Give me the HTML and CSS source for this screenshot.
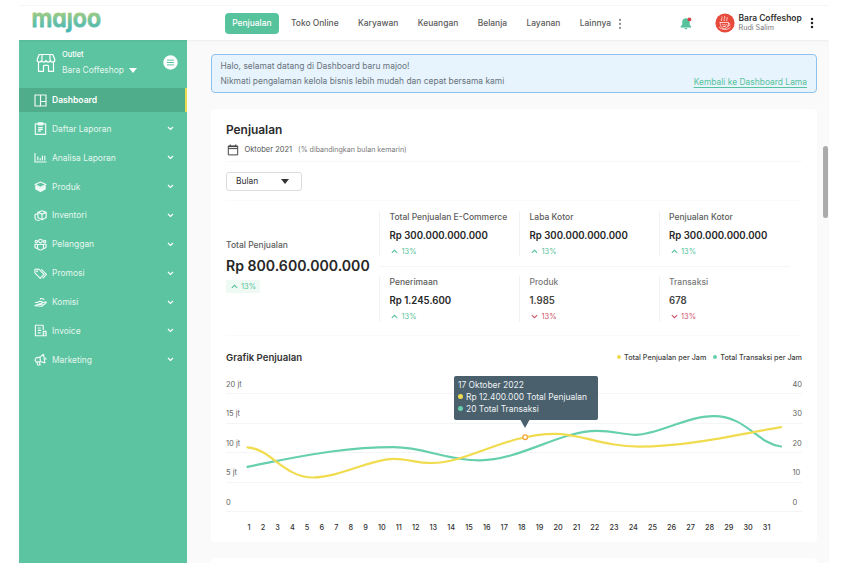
FILE: index.html
```html
<!DOCTYPE html>
<html lang="id">

<head>
    <meta charset="utf-8">
    <title>majoo - Dashboard</title>
    <link rel="stylesheet" href="styles.css">
</head>

<body>
    <div class="app">
        <header class="topbar">
            <svg class="logo" width="205" height="34" viewBox="0 0 205 34">
                <defs>
                    <linearGradient id="brand" gradientUnits="userSpaceOnUse" x1="0" y1="6" x2="0" y2="26">
                        <stop offset="0" stop-color="#a3cc80"/>
                        <stop offset=".5" stop-color="#66c0a2"/>
                        <stop offset="1" stop-color="#45b5b5"/>
                    </linearGradient>
                </defs>
                <text x="12.500" y="21" textLength="69.500" lengthAdjust="spacingAndGlyphs">majoo</text>
                <!-- hides the dot of the j -->
                <path class="nodot" d="M40 0h18v6.400H40z"/>
            </svg>
            <nav class="nav">
                <a class="nav-link active">Penjualan</a>
                <a class="nav-link">Toko Online</a>
                <a class="nav-link">Karyawan</a>
                <a class="nav-link">Keuangan</a>
                <a class="nav-link">Belanja</a>
                <a class="nav-link">Layanan</a>
                <a class="nav-link">Lainnya</a>
                <svg class="dots" width="4" height="12" viewBox="0 0 4 12" fill="#888"><circle cx="2" cy="1.9" r="1.1"/><circle cx="2" cy="5.9" r="1.1"/><circle cx="2" cy="9.9" r="1.1"/></svg>
            </nav>
            <div class="account">
                <svg class="bell" width="12" height="13" viewBox="0 0 12 13">
                    <path d="M5.500 1.200c-2.200.3-3.300 2-3.300 4v2.600L.6 9.600v.8h10.600v-.8L9.700 7.800V5C9.600 3 8 1 5.500 1.200z" fill="#55c29b"/>
                    <path d="M4.400 11h3a1.500 1.300 0 0 1-3 0z" fill="#55c29b"/>
                    <circle cx="9.400" cy="2.400" r="1.900" fill="#d9424a"/>
                </svg>
                <svg class="avatar" width="20" height="20" viewBox="0 0 20 20">
                    <circle cx="10" cy="10" r="9.600" fill="#e8493a"/>
                    <g fill="none" stroke="#fff" stroke-width=".7" stroke-linecap="round" stroke-linejoin="round">
                        <path d="M5.200 9.500h8.400c0 3.400-1.400 6-4.200 6s-4.200-2.600-4.200-6z"/>
                        <path d="M13.500 10.500c2.300-.6 2.300 2.900-.8 2.600M4.200 14.200c2 2.700 8.500 3.300 11 .3"/>
                        <path d="M6.500 7.800C5 6.200 8.200 5.600 7 3.800M9.200 7.800c-1.500-1.700 1.800-2.500.4-4.600M11.800 7.800c-1.200-1.400 1.300-2 .4-3.400"/>
                        <path d="M7.500 11.500c1 1.200 1.200-.8 2.200.4s1.200-.6 2-.4M8 13.500h2.500"/>
                    </g>
                </svg>
                <div class="who">
                    <div class="who-shop">Bara Coffeshop</div>
                    <div class="who-name">Rudi Salim</div>
                </div>
                <svg class="more" width="4" height="12" viewBox="0 0 4 12" fill="#222"><circle cx="2" cy="1.900" r="1.250"/><circle cx="2" cy="6" r="1.250"/><circle cx="2" cy="10.100" r="1.250"/></svg>
            </div>
        </header>

        <div class="body">
            <aside class="sidebar">
                <div class="outlet">
                    <svg width="20" height="20" viewBox="0 0 20 20" fill="none" stroke="#fff" stroke-width="1.200" stroke-linejoin="round" stroke-linecap="round">
                        <path d="M3.200 1.500h13.600l2 5v.8c0 2.300-4.300 2.300-4.400 0 0 2.300-4.400 2.300-4.400 0 0 2.300-4.400 2.300-4.400 0-.1 2.300-4.400 2.300-4.400 0v-.8zM6 6.800V1.500M14 6.800V1.500"/>
                        <path d="M2.500 9.500v8.800h5v-5.300c0-1.200 5-1.200 5 0v5.300h5V9.500"/>
                    </svg>
                    <div class="outlet-text">
                        <div class="outlet-label">Outlet</div>
                        <div class="outlet-name">Bara Coffeshop <i class="caret"></i></div>
                    </div>
                    <svg class="burger" width="15" height="15" viewBox="0 0 15 15"><circle cx="7.500" cy="7.500" r="7.200" fill="#fff"/><path d="M4 5.100h7M4 7.500h7M4 9.900h7" stroke="#5cc4a1" stroke-width="1"/></svg>
                </div>
                <ul class="menu">
                    <li class="menu-item current">
                        <svg class="icon" viewBox="0 0 13 13"><path d="M1 1h11v11H1zM6.500 1v11M6.500 7.500H12"/></svg>
                        <span>Dashboard</span>
                    </li>
                    <li class="menu-item">
                        <svg class="icon" viewBox="0 0 13 13"><path d="M1.300 1.800h10.400v10.500H1.300z"/><path d="M4.200.8h4.600v2H4.200z" fill="#fff"/><path d="M4.200 5.600h4.600M4.200 7.300h4.600M4.200 9h2.600" stroke-width="1.300"/></svg>
                        <span>Daftar Laporan</span>
                        <svg class="chevron" viewBox="0 0 7 5"><path d="M1 1l2.500 2.500L6 1"/></svg>
                    </li>
                    <li class="menu-item">
                        <svg class="icon" viewBox="0 0 13 13"><path d="M1 2v9h11.500M3.800 9.500v-4M6.200 9.500V7M8.400 9.500v-5M10.800 9.500V4.800"/></svg>
                        <span>Analisa Laporan</span>
                        <svg class="chevron" viewBox="0 0 7 5"><path d="M1 1l2.500 2.500L6 1"/></svg>
                    </li>
                    <li class="menu-item">
                        <svg class="icon" viewBox="0 0 13 13"><path d="M6.500 2L12 4.600 6.500 7.300 1 4.600z"/><path d="M1.800 6v3l4.700 2.400L11.200 9V6L6.500 8.600z" fill="#f0faf6"/></svg>
                        <span>Produk</span>
                        <svg class="chevron" viewBox="0 0 7 5"><path d="M1 1l2.500 2.500L6 1"/></svg>
                    </li>
                    <li class="menu-item">
                        <svg class="icon" viewBox="0 0 13 13"><path d="M8 1.800l4.200 1.600v5.200L8 10.700 3.900 8.600V3.400zM3.900 3.400L8 5.100l4.200-1.700M8 5.100v5.600M3.900 4.600L1 5.500V9l1.200 2 3.500.5"/></svg>
                        <span>Inventori</span>
                        <svg class="chevron" viewBox="0 0 7 5"><path d="M1 1l2.500 2.500L6 1"/></svg>
                    </li>
                    <li class="menu-item">
                        <svg class="icon" viewBox="0 0 13 13"><circle cx="6.500" cy="3" r="1.800"/><circle cx="2.300" cy="3.600" r="1.200"/><circle cx="10.700" cy="3.600" r="1.200"/><path d="M3.500 6.500h6v3c0 3.300-6 3.300-6 0zM3.300 6.200H.9v2c0 1.400 1 2.200 2.400 2.200M9.700 6.200h2.400v2c0 1.400-1 2.200-2.400 2.200"/></svg>
                        <span>Pelanggan</span>
                        <svg class="chevron" viewBox="0 0 7 5"><path d="M1 1l2.500 2.500L6 1"/></svg>
                    </li>
                    <li class="menu-item">
                        <svg class="icon" viewBox="0 0 13 13"><path d="M.9 2.200v3.600l5.300 5.500 3.800-3.900-5.200-5.300zM7.200 2.200l5.200 5.200-3.600 3.900"/><circle cx="3" cy="4.200" r=".4"/></svg>
                        <span>Promosi</span>
                        <svg class="chevron" viewBox="0 0 7 5"><path d="M1 1l2.500 2.500L6 1"/></svg>
                    </li>
                    <li class="menu-item">
                        <svg class="icon" viewBox="0 0 13 13"><path d="M1 6.500h2.500l1.700-1.200 2.500.2 1.200 1.200-2.300.5M8.900 6.700L12 5.800c.8.6-.6 1.800-4.300 4.500L1 9.600z"/><path d="M4.500 8.400h4M6.500 2v1.500M6.500 2.800c2-.7 3.300.2 3.300 1.400"/></svg>
                        <span>Komisi</span>
                        <svg class="chevron" viewBox="0 0 7 5"><path d="M1 1l2.500 2.500L6 1"/></svg>
                    </li>
                    <li class="menu-item">
                        <svg class="icon" viewBox="0 0 13 13"><path d="M9.200 6V1.200H1.400v10.500h7M3.700 4h3M3.700 6.300h3.500M3.700 8.800h3M1.400 11.700h10.700V7.300H9.300v4.400M10.800 9.300v.8"/></svg>
                        <span>Invoice</span>
                        <svg class="chevron" viewBox="0 0 7 5"><path d="M1 1l2.500 2.500L6 1"/></svg>
                    </li>
                    <li class="menu-item">
                        <svg class="icon" viewBox="0 0 13 13"><path d="M9.500 1.300L6 4.100l-4 .8-.9 2.300 1 1.900 4-.6 4.800 1.400zM6 4.100l.4 4.400M3 9.200l.8 2.800h2.300l-.7-3.200M11.500 4.700l.6 1.900"/></svg>
                        <span>Marketing</span>
                        <svg class="chevron" viewBox="0 0 7 5"><path d="M1 1l2.500 2.500L6 1"/></svg>
                    </li>
                </ul>
            </aside>

            <main class="main">
                <section class="notice">
                    <div>
                        <p>Halo, selamat datang di Dashboard baru majoo!</p>
                        <p>Nikmati pengalaman kelola bisnis lebih mudah dan cepat bersama kami</p>
                    </div>
                    <a class="notice-link">Kembali ke Dashboard Lama</a>
                </section>

                <section class="card">
                    <h1>Penjualan</h1>
                    <div class="period">
                        <svg width="12" height="12" viewBox="0 0 12 12" fill="none" stroke="#444" stroke-width="1"><path d="M1.300 2h9.400v8.900H1.300zM1.300 4.600h9.400M3.300.5V2M8.700.5V2"/><path d="M1.300 2.500h9.400" stroke-width="1.200"/></svg>
                        <span class="month">Oktober 2021</span>
                        <span class="compare">(% dibandingkan bulan kemarin)</span>
                    </div>
                    <div class="filter">
                        <div class="select">Bulan <i class="caret"></i></div>
                    </div>

                    <div class="stats">
                        <div class="total">
                            <div class="stat-label">Total Penjualan</div>
                            <div class="total-value">Rp 800.600.000.000</div>
                            <div class="trend badge"><svg viewBox="0 0 7 5"><path d="M.8 3.800l2.700-2.500 2.700 2.500"/></svg>13%</div>
                        </div>
                        <div class="stat-grid">
                            <div class="stat">
                                <div class="stat-label">Total Penjualan E-Commerce</div>
                                <div class="stat-value">Rp 300.000.000.000</div>
                                <div class="trend"><svg viewBox="0 0 7 5"><path d="M.8 3.800l2.700-2.500 2.700 2.500"/></svg>13%</div>
                            </div>
                            <div class="stat">
                                <div class="stat-label">Laba Kotor</div>
                                <div class="stat-value">Rp 300.000.000.000</div>
                                <div class="trend"><svg viewBox="0 0 7 5"><path d="M.8 3.800l2.700-2.500 2.700 2.500"/></svg>13%</div>
                            </div>
                            <div class="stat">
                                <div class="stat-label">Penjualan Kotor</div>
                                <div class="stat-value">Rp 300.000.000.000</div>
                                <div class="trend"><svg viewBox="0 0 7 5"><path d="M.8 3.800l2.700-2.500 2.700 2.500"/></svg>13%</div>
                            </div>
                            <div class="stat">
                                <div class="stat-label">Penerimaan</div>
                                <div class="stat-value">Rp 1.245.600</div>
                                <div class="trend"><svg viewBox="0 0 7 5"><path d="M.8 3.800l2.700-2.500 2.700 2.500"/></svg>13%</div>
                            </div>
                            <div class="stat muted">
                                <div class="stat-label">Produk</div>
                                <div class="stat-value">1.985</div>
                                <div class="trend down"><svg viewBox="0 0 7 5"><path d="M.8 1.200l2.700 2.500 2.700-2.500"/></svg>13%</div>
                            </div>
                            <div class="stat muted">
                                <div class="stat-label">Transaksi</div>
                                <div class="stat-value">678</div>
                                <div class="trend down"><svg viewBox="0 0 7 5"><path d="M.8 1.200l2.700 2.500 2.700-2.500"/></svg>13%</div>
                            </div>
                        </div>
                    </div>

                    <div class="chart-head">
                        <h2>Grafik Penjualan</h2>
                        <div class="legend">
                            <span><i class="dot yellow"></i>Total Penjualan per Jam</span>
                            <span><i class="dot green"></i>Total Transaksi per Jam</span>
                        </div>
                    </div>
                    <div class="chart">
                        <div class="line"><span>20 jt</span><span>40</span></div>
                        <div class="line"><span>15 jt</span><span>30</span></div>
                        <div class="line"><span>10 jt</span><span>20</span></div>
                        <div class="line"><span>5 jt</span><span>10</span></div>
                        <div class="line"><span>0</span><span>0</span></div>
                        <svg class="plot" viewBox="226 365 576 147" fill="none" stroke-width="2.200" stroke-linecap="round">
                            <path stroke="#66cfae" d="M247.500 466.800C261 464 270 462 277 460.800C305 455.500 345 447.200 394 447.200C425 447.200 445 460.300 480 460.300C520 460.300 560 430.800 597 430.800C615 430.800 622 434.800 636 434.800C658 434.800 686 416.100 714 416.100C746 416.100 757 443.500 781 446.500"/>
                            <path stroke="#f0dc4e" d="M247.500 447.300C271 449 284 477.500 313 477.500C340 477.500 370 458.800 394 458.800C408 458.800 416 463 432 463C468 463 506 433.800 555 433.800C582 433.800 602 446.600 640 446.600C688 446.600 740 434 781 427.200"/>
                            <circle cx="525.200" cy="437.200" r="2.300" fill="#fff" stroke="#f2a53a" stroke-width="1.300"/>
                        </svg>
                        <div class="tooltip">
                            <div>17 Oktober 2022</div>
                            <div><i class="dot yellow"></i>Rp 12.400.000 Total Penjualan</div>
                            <div><i class="dot green"></i>20 Total Transaksi</div>
                        </div>
                    </div>
                    <div class="days">
                        <span>1</span><span>2</span><span>3</span><span>4</span><span>5</span><span>6</span><span>7</span><span>8</span>
                        <span>9</span><span>10</span><span>11</span><span>12</span><span>13</span><span>14</span><span>15</span><span>16</span>
                        <span>17</span><span>18</span><span>19</span><span>20</span><span>21</span><span>22</span><span>23</span><span>24</span>
                        <span>25</span><span>26</span><span>27</span><span>28</span><span>29</span><span>30</span><span>31</span>
                    </div>
                </section>

                <section class="card next"></section>
                <div class="scrollbar"></div>
            </main>
        </div>
    </div>
</body>

</html>
```

FILE: styles.css
```css
* {
    box-sizing: border-box;
}

body {
    margin: 0;
    background: #fff;
    font-family: Inter, "Liberation Sans", sans-serif;
    font-size: 8.45px;
    color: #555;
}

h1, h2, p, ul {
    margin: 0;
    padding: 0;
}

.app {
    width: 810px;
    height: 558px;
    margin: 5px 0 0 19px;
    overflow: hidden;
    border-top: 1px solid #f6f6f6;
}

/* top bar */
.topbar {
    position: relative;
    z-index: 1;
    display: flex;
    align-items: center;
    height: 34px;
    background: #fff;
    box-shadow: 0 1px 2px rgba(0, 0, 0, 0.06);
}

.logo {
    flex: none;
    margin-right: 1px;
    font-size: 24.5px;
    font-weight: 600;
    font-feature-settings: "cv11";
    fill: url(#brand);
    stroke: url(#brand);
    stroke-width: 0.8;
    stroke-linejoin: round;
}

.nodot {
    fill: #fff;
    stroke: none;
}

.nav {
    display: flex;
    align-items: center;
    gap: 5px;
    height: 100%;
    padding-top: 1px;
}

.nav-link {
    padding: 0 7.2px;
    line-height: 21.5px;
    font-weight: 500;
    border-radius: 4px;
    color: #5a5a5a;
    white-space: nowrap;
}

.nav-link.active {
    background: #57c39c;
    color: #fff;
}

.dots {
    margin-left: -5.5px;
}

.account {
    display: flex;
    align-items: center;
    margin-left: auto;
    padding-right: 15px;
}

.bell {
    margin-right: 23px;
}

.who {
    width: 75.5px;
    padding-left: 4px;
    line-height: 10.5px;
}

.who-shop {
    font-weight: 600;
    color: #333;
    white-space: nowrap;
}

.who-name {
    font-size: 7.2px;
    color: #777;
}

.body {
    display: flex;
    height: 523px;
}

/* sidebar */
.sidebar {
    width: 168px;
    background: #5cc4a1;
    color: #fff;
}

.outlet {
    display: flex;
    align-items: center;
    height: 48px;
    padding: 0 9px 3px 16.5px;
}

.outlet-text {
    flex: 1;
    padding-left: 6.5px;
    line-height: 14.5px;
}

.outlet-label {
    font-size: 7.5px;
    font-weight: 500;
}

.outlet-name {
    color: #e4f6ef;
}

.caret {
    display: inline-block;
    margin-left: 3px;
    border: 4px solid transparent;
    border-top: 5px solid currentColor;
    border-bottom: 0;
}

.outlet-name .caret {
    border-top-color: #fff;
}

.menu {
    display: flex;
    flex-direction: column;
    gap: 4.87px;
    list-style: none;
}

.menu-item {
    display: flex;
    align-items: center;
    height: 24px;
    padding: 0 13px 0 14.5px;
    color: #e4f6ef;
}

.menu-item span {
    flex: 1;
    padding-left: 5.5px;
}

.menu-item.current {
    background: #4fad8c;
    border-right: 2px solid #e8dc50;
    color: #fff;
    font-size: 8.55px;
    font-weight: 600;
}

.icon {
    width: 13px;
    height: 13px;
    fill: none;
    stroke: #f0faf6;
    stroke-width: 1.15;
    stroke-linejoin: round;
}

.chevron {
    width: 7px;
    height: 5px;
    fill: none;
    stroke: #fff;
    stroke-width: 1.2;
}

/* content */
.main {
    position: relative;
    flex: 1;
    padding: 14px 12px 0 24px;
    background: #fafafa;
}

.notice {
    display: flex;
    justify-content: space-between;
    align-items: flex-end;
    height: 39px;
    padding: 0 9px 4px 8.5px;
    border: 1px solid #8fc1ee;
    border-radius: 4px;
    background: #e7f3fd;
    line-height: 14.5px;
    color: #68737c;
}

.notice-link {
    line-height: 12px;
    color: #57c39c;
    text-decoration: underline;
    text-underline-offset: 2px;
}

.card {
    height: 432.5px;
    margin-top: 16px;
    padding: 13px 15px 0;
    border-radius: 4px;
    background: #fff;
}

.card.next {
    height: 20px;
}

h1 {
    font-size: 11.9px;
    font-weight: 600;
    line-height: 16px;
    color: #2b2b2b;
}

.period {
    display: flex;
    align-items: center;
    height: 24px;
    padding-left: 1px;
    border-bottom: 1px solid #f8f8f8;
    font-size: 7.5px;
}

.month {
    padding: 0 6px 0 5.5px;
}

.compare {
    font-size: 7.1px;
    color: #777;
}

.filter {
    height: 39px;
    padding-top: 9.5px;
    border-bottom: 1px solid #fafafa;
}

.select {
    display: flex;
    justify-content: space-between;
    align-items: center;
    width: 76px;
    height: 19.5px;
    padding: 0 12px 0 9px;
    border: 1px solid #dcdcdc;
    border-radius: 3px;
    color: #333;
}

.stats {
    display: flex;
    height: 135px;
    padding: 10px 12px 14px 0;
    border-bottom: 1px solid #fafafa;
}

.total {
    width: 153px;
    padding-top: 27px;
}

.stat-label {
    height: 14px;
    line-height: 14px;
    font-size: 8.5px;
    font-weight: 500;
    color: #5c5c5c;
    white-space: nowrap;
}

.total-value {
    line-height: 28px;
    font-size: 14.1px;
    font-weight: 600;
    color: #262626;
    white-space: nowrap;
}

.stat-grid {
    flex: 1;
    display: grid;
    grid-template-columns: 140px 139.5px 1fr;
    grid-template-rows: 45px 46px;
    row-gap: 20px;
    background: linear-gradient(#f6f6f6, #f6f6f6) 0 55px / 100% 1px no-repeat;
}

.stat {
    padding-left: 9.5px;
    border-left: 1px solid #f2f2f2;
}

.stat .stat-label {
    line-height: 12px;
}

.stat-value {
    line-height: 21px;
    font-size: 9.65px;
    font-weight: 600;
    color: #262626;
    white-space: nowrap;
}

.muted .stat-label {
    color: #777;
}

.muted .stat-value {
    color: #444;
}

.trend {
    display: flex;
    align-items: center;
    gap: 3.5px;
    height: 12px;
    padding-left: 1.5px;
    font-size: 7.5px;
    color: #57c39c;
}

.trend svg {
    width: 7px;
    height: 5px;
    fill: none;
    stroke: currentColor;
    stroke-width: 1.1;
}

.stat .trend {
    margin-top: -0.5px;
}

.trend.down {
    color: #d0546a;
}

.badge {
    width: 34px;
    height: 13px;
    padding-left: 4.5px;
    background: #effaf5;
}

/* chart */
.chart-head {
    display: flex;
    justify-content: space-between;
    align-items: flex-end;
    height: 29px;
    padding-bottom: 1px;
}

h2 {
    font-size: 9.6px;
    font-weight: 600;
    line-height: 12px;
    color: #333;
}

.legend {
    display: flex;
    gap: 7px;
    font-size: 7.2px;
    font-weight: 500;
    line-height: 12px;
    color: #444;
}

.dot {
    display: inline-block;
    width: 4px;
    height: 4px;
    margin-right: 3px;
    border-radius: 50%;
    vertical-align: 1px;
}

.yellow {
    background: #f0dc4e;
}

.green {
    background: #66cfae;
}

.chart {
    position: relative;
    height: 147px;
}

.line {
    display: flex;
    justify-content: space-between;
    height: 29.4px;
    padding-top: 14px;
    border-bottom: 1px solid #f5f5f5;
    font-size: 7.5px;
    line-height: 12px;
    color: #666;
}

.line span:last-child {
    width: 9.5px;
}

.plot {
    position: absolute;
    left: 0;
    top: 0;
    width: 576px;
    height: 147px;
}

.tooltip {
    position: absolute;
    left: 227.5px;
    top: 11px;
    width: 144px;
    height: 44px;
    padding: 3px 4.5px;
    border-radius: 2px;
    background: #4a606d;
    color: #eef2f4;
    line-height: 12.2px;
    white-space: nowrap;
}

.tooltip::after {
    content: "";
    position: absolute;
    left: 66.5px;
    top: 43px;
    border: 5.5px solid transparent;
    border-top: 9px solid #4a606d;
    border-bottom: 0;
}

.tooltip .dot {
    width: 5px;
    height: 5px;
}

.days {
    display: flex;
    justify-content: space-between;
    padding: 10px 31.5px 0 21.5px;
    font-size: 7.3px;
    font-weight: 500;
    line-height: 12px;
    color: #333;
}

.scrollbar {
    position: absolute;
    right: 1px;
    top: 106px;
    width: 5px;
    height: 72px;
    border-radius: 3px;
    background: #ababab;
}
```
